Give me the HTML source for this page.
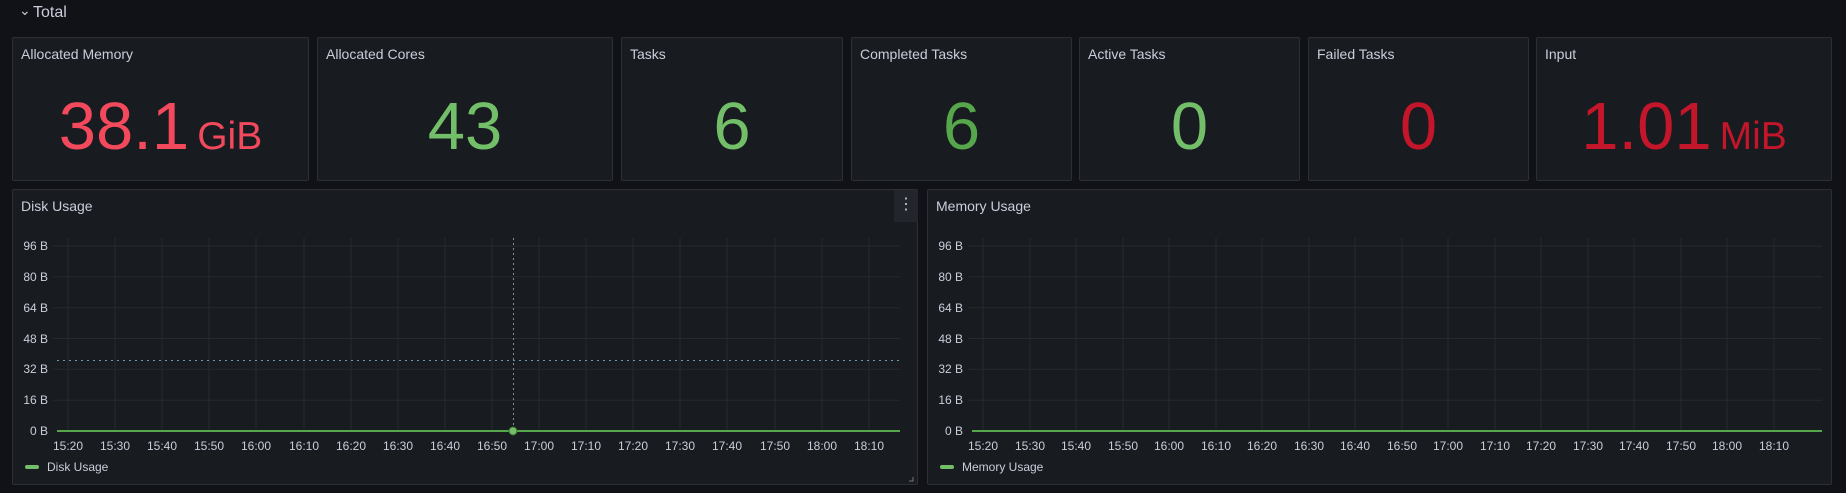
<!DOCTYPE html>
<html><head><meta charset="utf-8"><style>
*{margin:0;padding:0;box-sizing:border-box}
body{width:1846px;height:493px;background:#111217;font-family:"Liberation Sans",sans-serif;position:relative;overflow:hidden;color:#ccccdc}
.p{position:absolute;background:#181b1f;border:1px solid #2c2f35;border-radius:2px}
.t{position:absolute;left:8px;top:8px;font-size:14px;color:#ccccdc}
.v{position:absolute;left:0;right:0;top:44px;text-align:center;font-size:67px;line-height:90px;white-space:nowrap}
.v span{font-size:39px;margin-left:8px}
</style></head><body>
<div style="position:absolute;left:19px;top:2px;font-size:14px;color:#ccccdc">⌄</div>
<div style="position:absolute;left:33px;top:4px;font-size:16px;color:#ccccdc">Total</div>

<div class="p" style="left:12px;top:37px;width:297px;height:144px"><div class="t">Allocated Memory</div><div class="v" style="color:#f2495c">38.1<span>GiB</span></div></div>
<div class="p" style="left:317px;top:37px;width:296px;height:144px"><div class="t">Allocated Cores</div><div class="v" style="color:#73bf69">43</div></div>
<div class="p" style="left:621px;top:37px;width:222px;height:144px"><div class="t">Tasks</div><div class="v" style="color:#73bf69">6</div></div>
<div class="p" style="left:851px;top:37px;width:221px;height:144px"><div class="t">Completed Tasks</div><div class="v" style="color:#56a64b">6</div></div>
<div class="p" style="left:1079px;top:37px;width:221px;height:144px"><div class="t">Active Tasks</div><div class="v" style="color:#73bf69">0</div></div>
<div class="p" style="left:1308px;top:37px;width:221px;height:144px"><div class="t">Failed Tasks</div><div class="v" style="color:#c4162a">0</div></div>
<div class="p" style="left:1536px;top:37px;width:296px;height:144px"><div class="t">Input</div><div class="v" style="color:#c4162a">1.01<span>MiB</span></div></div>

<div class="p" style="left:12px;top:189px;width:906px;height:296px"><div class="t" style="top:8px">Disk Usage</div></div>
<div class="p" style="left:927px;top:189px;width:905px;height:296px"><div class="t" style="top:8px">Memory Usage</div></div>
<div style="position:absolute;left:894px;top:190px;width:24px;height:32px;background:#22252b;color:#ccccdc;font-size:16px;text-align:center;line-height:30px">⋮</div>

<svg style="position:absolute;left:0;top:0" width="1846" height="493" font-family="Liberation Sans, sans-serif" font-size="12" fill="#ccccdc">
<g stroke="#26292e" stroke-width="1">
<path d="M53 246H900M53 276.8H900M53 307.7H900M53 338.5H900M53 369.3H900M53 400.2H900"/>
<path d="M68 238V431M115 238V431M162 238V431M209 238V431M256 238V431M304 238V431M351 238V431M398 238V431M445 238V431M492 238V431M539 238V431M586 238V431M633 238V431M680 238V431M727 238V431M775 238V431M822 238V431M869 238V431"/>
<path d="M968 246H1822M968 276.8H1822M968 307.7H1822M968 338.5H1822M968 369.3H1822M968 400.2H1822"/>
<path d="M983 238V431M1030 238V431M1076 238V431M1123 238V431M1169 238V431M1216 238V431M1262 238V431M1309 238V431M1355 238V431M1402 238V431M1448 238V431M1495 238V431M1541 238V431M1588 238V431M1634 238V431M1681 238V431M1727 238V431M1774 238V431"/>
</g>
<path d="M57 360.5H900" stroke="#6c9bb0" stroke-dasharray="2 4"/>
<path d="M513.5 238V431" stroke="#8e8e8e" stroke-dasharray="2 3"/>
<path d="M57 431H900M972 431H1822" stroke="#56a64b" stroke-width="2"/>
<circle cx="513" cy="431" r="4" fill="#73bf69" stroke="#3d6b37"/>
<rect x="25" y="465" width="14" height="4" rx="2" fill="#73bf69"/>
<rect x="940" y="465" width="14" height="4" rx="2" fill="#73bf69"/>
<text x="47" y="471">Disk Usage</text>
<text x="962" y="471">Memory Usage</text>
<path d="M913 477V481H909" stroke="#777" fill="none"/>
<g text-anchor="end">
<text x="48" y="250">96 B</text><text x="48" y="281">80 B</text><text x="48" y="312">64 B</text><text x="48" y="343">48 B</text><text x="48" y="373">32 B</text><text x="48" y="404">16 B</text><text x="48" y="435">0 B</text>
<text x="963" y="250">96 B</text><text x="963" y="281">80 B</text><text x="963" y="312">64 B</text><text x="963" y="343">48 B</text><text x="963" y="373">32 B</text><text x="963" y="404">16 B</text><text x="963" y="435">0 B</text>
</g>
<g text-anchor="middle">
<text x="68" y="450">15:20</text><text x="115" y="450">15:30</text><text x="162" y="450">15:40</text><text x="209" y="450">15:50</text><text x="256" y="450">16:00</text><text x="304" y="450">16:10</text><text x="351" y="450">16:20</text><text x="398" y="450">16:30</text><text x="445" y="450">16:40</text><text x="492" y="450">16:50</text><text x="539" y="450">17:00</text><text x="586" y="450">17:10</text><text x="633" y="450">17:20</text><text x="680" y="450">17:30</text><text x="727" y="450">17:40</text><text x="775" y="450">17:50</text><text x="822" y="450">18:00</text><text x="869" y="450">18:10</text>
<text x="983" y="450">15:20</text><text x="1030" y="450">15:30</text><text x="1076" y="450">15:40</text><text x="1123" y="450">15:50</text><text x="1169" y="450">16:00</text><text x="1216" y="450">16:10</text><text x="1262" y="450">16:20</text><text x="1309" y="450">16:30</text><text x="1355" y="450">16:40</text><text x="1402" y="450">16:50</text><text x="1448" y="450">17:00</text><text x="1495" y="450">17:10</text><text x="1541" y="450">17:20</text><text x="1588" y="450">17:30</text><text x="1634" y="450">17:40</text><text x="1681" y="450">17:50</text><text x="1727" y="450">18:00</text><text x="1774" y="450">18:10</text>
</g>
</svg>
</body></html>
